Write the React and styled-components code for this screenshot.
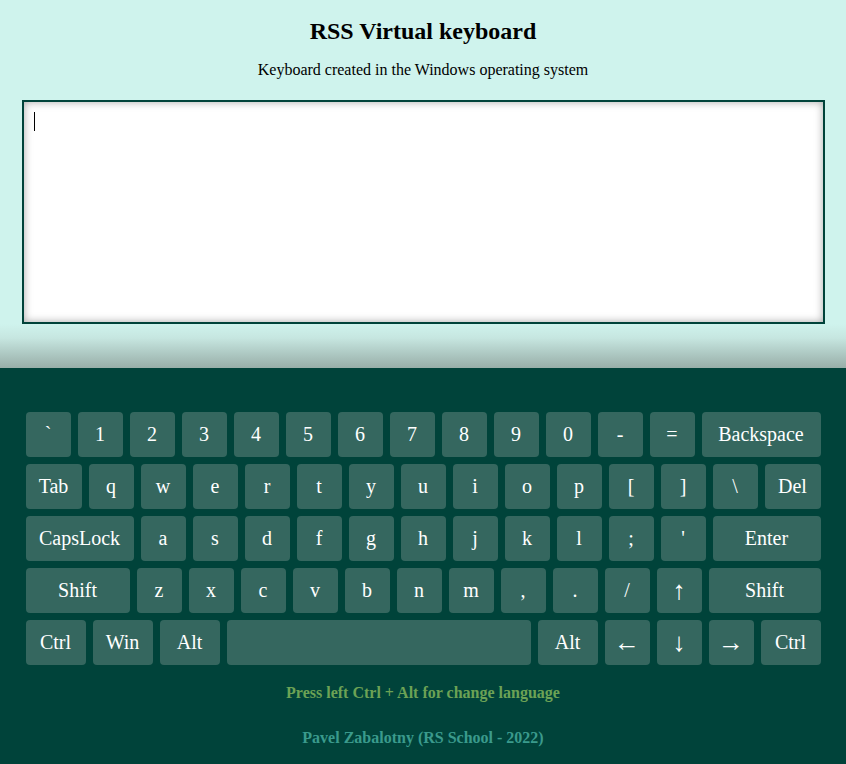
import React from "react";
import styled, { createGlobalStyle } from "styled-components";

const Global = createGlobalStyle`
  html, body { margin: 0; padding: 0; }
  body { font-family: "Liberation Serif", "Times New Roman", serif; background: #00433a; }
`;

const Page = styled.div`
  min-height: 100vh;
  display: flex;
  flex-direction: column;
`;

const Top = styled.header`
  display: flex;
  flex-direction: column;
  align-items: center;
  padding: 17px 21px 44px;
  background: linear-gradient(to bottom, #cff3ed calc(100% - 44px), #c6e6e0 calc(100% - 30px), #98aea8 100%);
`;

const Title = styled.h1`
  margin: 0;
  font-size: 24px;
  line-height: 28px;
  font-weight: bold;
  color: #000;
`;

const Subtitle = styled.p`
  margin: 16px 0 0;
  font-size: 16px;
  line-height: 18px;
  color: #000;
`;

const Field = styled.div`
  position: relative;
  margin-top: 21px;
`;

const TextArea = styled.textarea`
  display: block;
  box-sizing: border-box;
  width: 803px;
  height: 224px;
  border: 2px solid #00433a;
  background: #fff;
  box-shadow: inset 0 0 8px rgba(0, 0, 0, 0.35);
  padding: 10px;
  resize: none;
  outline: none;
  font-family: "Liberation Serif", serif;
  font-size: 20px;
  caret-color: transparent;
`;

const Caret = styled.span`
  position: absolute;
  left: 12px;
  top: 12px;
  width: 1px;
  height: 19px;
  background: #000;
  pointer-events: none;
`;

const Bottom = styled.main`
  flex: 1;
  background: #00433a;
  padding: 44px 0 20px;
  display: flex;
  flex-direction: column;
  align-items: center;
`;

const Keyboard = styled.div`
  width: 795px;
  display: flex;
  flex-direction: column;
  gap: 7px;
`;

const Row = styled.div`
  display: flex;
  gap: 7px;
`;

const Key = styled.div`
  flex: 0 0 ${(p) => p.$w || 45}px;
  height: 45px;
  border-radius: 4px;
  background: #35675f;
  color: #fff;
  font-size: ${(p) => (p.$arrow ? 26 : 20)}px;
  display: flex;
  align-items: center;
  justify-content: center;
  user-select: none;
`;

const Hint = styled.p`
  margin: 19px 0 0;
  font-size: 16px;
  line-height: 18px;
  font-weight: bold;
  color: #6ca255;
`;

const Author = styled.p`
  margin: 27px 0 0;
  font-size: 16px;
  line-height: 18px;
  font-weight: bold;
  color: #3a9a8c;
`;

const ARROWS = ["↑", "↓", "←", "→"];

const rows = [
  [["`"], ["1"], ["2"], ["3"], ["4"], ["5"], ["6"], ["7"], ["8"], ["9"], ["0"], ["-"], ["="], ["Backspace", 119]],
  [["Tab", 56], ["q"], ["w"], ["e"], ["r"], ["t"], ["y"], ["u"], ["i"], ["o"], ["p"], ["["], ["]"], ["\\"], ["Del", 56]],
  [["CapsLock", 108], ["a"], ["s"], ["d"], ["f"], ["g"], ["h"], ["j"], ["k"], ["l"], [";"], ["'"], ["Enter", 108]],
  [["Shift", 104], ["z"], ["x"], ["c"], ["v"], ["b"], ["n"], ["m"], [","], ["."], ["/"], ["↑"], ["Shift", 112]],
  [["Ctrl", 60], ["Win", 60], ["Alt", 60], ["", 304], ["Alt", 60], ["←"], ["↓"], ["→"], ["Ctrl", 60]],
];

export default function App() {
  return (
    <Page>
      <Global />
      <Top>
        <Title>RSS Virtual keyboard</Title>
        <Subtitle>Keyboard created in the Windows operating system</Subtitle>
        <Field>
          <TextArea />
          <Caret />
        </Field>
      </Top>
      <Bottom>
        <Keyboard>
          {rows.map((row, i) => (
            <Row key={i}>
              {row.map(([label, w], j) => (
                <Key key={j} $w={w} $arrow={ARROWS.includes(label)}>
                  {label}
                </Key>
              ))}
            </Row>
          ))}
        </Keyboard>
        <Hint>Press left Ctrl + Alt for change language</Hint>
        <Author>Pavel Zabalotny (RS School - 2022)</Author>
      </Bottom>
    </Page>
  );
}
